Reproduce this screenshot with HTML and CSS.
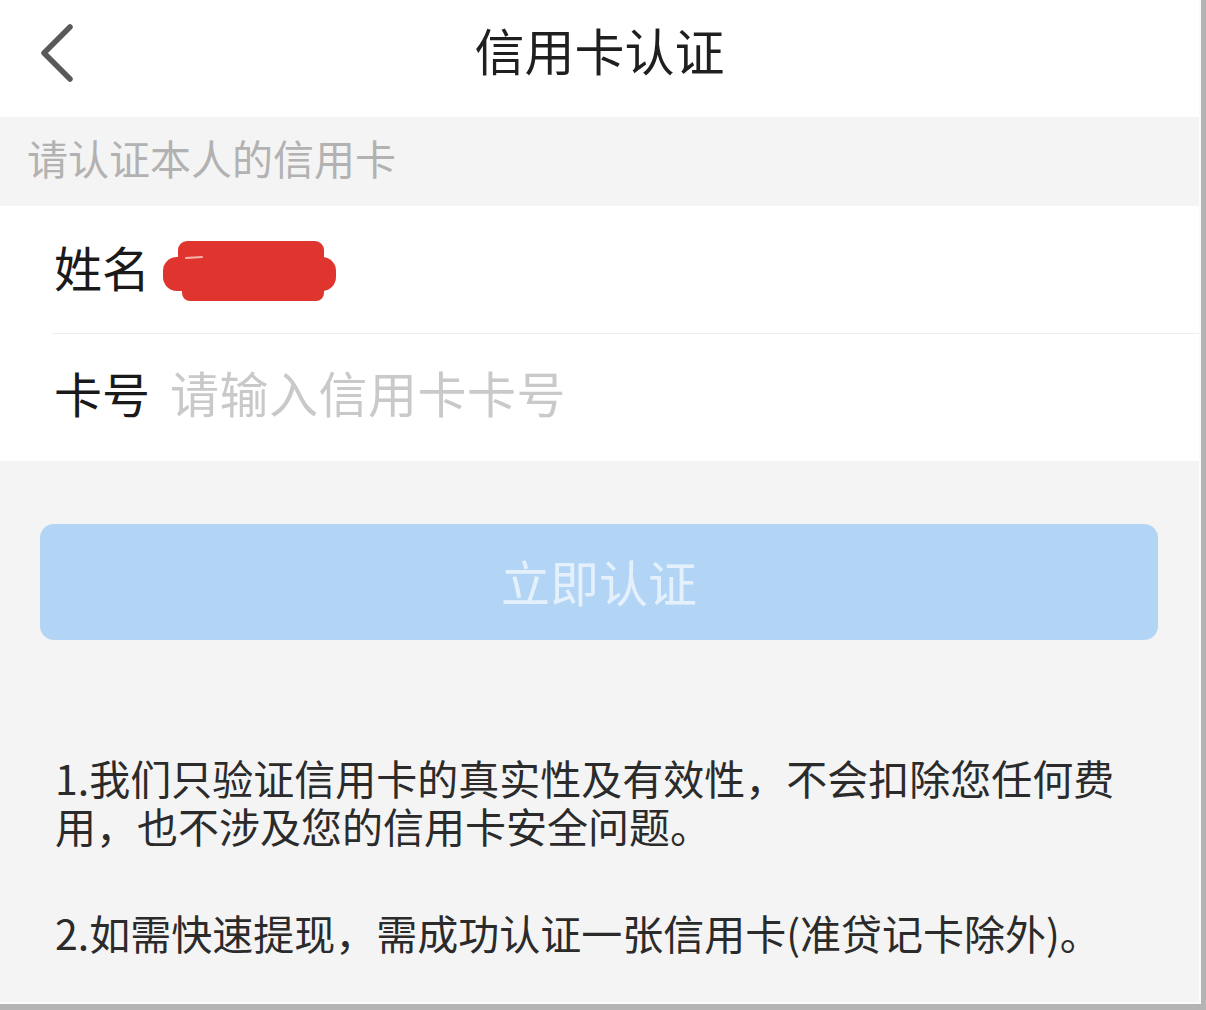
FILE: index.html
```html
<!DOCTYPE html>
<html lang="zh-CN">
<head>
<meta charset="utf-8">
<title>信用卡认证</title>
<link rel="stylesheet" href="styles.css">
</head>
<body>
<div class="screen">
  <header class="topbar">
    <div class="back">
      <svg width="40" height="60" viewBox="0 0 40 60" aria-hidden="true">
        <path d="M32 4 L6 30 L32 56" fill="none" stroke="#5a5a5a" stroke-width="5.5" stroke-linecap="round" stroke-linejoin="round"/>
      </svg>
    </div>
    <h1 class="title">信用卡认证</h1>
    <div class="spacer"></div>
  </header>

  <div class="hint">请认证本人的信用卡</div>

  <section class="form">
    <div class="row row-name">
      <span class="label">姓名</span>
      <svg class="redact" width="176" height="64" viewBox="0 0 176 64" aria-hidden="true">
        <rect x="16" y="2" width="146" height="36" rx="9" fill="#e0352f"/>
        <rect x="1" y="18" width="173" height="34" rx="14" fill="#e0352f"/>
        <rect x="20" y="36" width="142" height="26" rx="8" fill="#e0352f"/>
        <path d="M24 19 L40 18" stroke="#f3b3ad" stroke-width="2" stroke-linecap="round"/>
      </svg>
    </div>
    <div class="row row-card">
      <span class="label">卡号</span>
      <span class="placeholder">请输入信用卡卡号</span>
    </div>
  </section>

  <div class="action">
    <button class="submit" type="button">立即认证</button>
  </div>

  <div class="notes">
    <p>1.我们只验证信用卡的真实性及有效性，不会扣除您任何费用，也不涉及您的信用卡安全问题。</p>
    <p>2.如需快速提现，需成功认证一张信用卡(准贷记卡除外)。</p>
  </div>
</div>
</body>
</html>
```

FILE: styles.css
```css
* {
  box-sizing: border-box;
}

html, body {
  margin: 0;
  padding: 0;
}

body {
  background: #b4b4b4;
  font-family: "Noto Sans CJK SC", "Noto Sans", sans-serif;
  width: 1206px;
  height: 1010px;
  overflow: hidden;
}

.screen {
  width: 1201px;
  height: 1004px;
  background: #f4f4f4;
  border-right: 2px solid #fbfbfb;
  border-bottom: 2px solid #fbfbfb;
  display: flex;
  flex-direction: column;
  overflow: hidden;
}

.screen > * {
  flex-shrink: 0;
}

.topbar {
  height: 117px;
  background: #ffffff;
  display: grid;
  grid-template-columns: 1fr auto 1fr;
  align-items: center;
  padding: 0 38px 12px 38px;
}

.back {
  display: flex;
  align-items: center;
}

.back svg {
  display: block;
}

.title {
  margin: 0 0 8px 0;
  font-size: 50px;
  font-weight: 400;
  color: #1f1f1f;
  line-height: 1;
}

.hint {
  height: 89px;
  display: flex;
  align-items: center;
  padding-left: 27px;
  padding-bottom: 10px;
  font-size: 41px;
  color: #b2b2b2;
}

.form {
  background: #ffffff;
  padding-left: 52px;
}

.row {
  height: 127px;
  display: flex;
  align-items: center;
  padding-left: 2px;
}

.row-name {
  padding-bottom: 8px;
}

.row-card {
  height: 128px;
  border-top: 1px solid #eeeeee;
  padding-bottom: 12px;
}

.label {
  font-size: 48px;
  color: #1a1a1a;
  line-height: 1;
  margin-right: 12px;
}

.redact {
  display: block;
  margin-top: 10px;
}

.placeholder {
  font-size: 49px;
  color: #c9c9c9;
  line-height: 1;
  margin-left: 8px;
  letter-spacing: 0.5px;
}

.action {
  padding: 63px 41px 0 40px;
}

.submit {
  display: block;
  width: 100%;
  height: 116px;
  border: none;
  border-radius: 14px;
  background: #b3d5f5;
  color: #e4f0fc;
  font-family: inherit;
  font-size: 49px;
  padding: 0 0 4px 0;
  line-height: 1;
}

.notes {
  padding: 113px 52px 0 55px;
  font-size: 41px;
  line-height: 48px;
  color: #2b2b2b;
}

.notes p {
  margin: 0 0 59px 0;
}
```
